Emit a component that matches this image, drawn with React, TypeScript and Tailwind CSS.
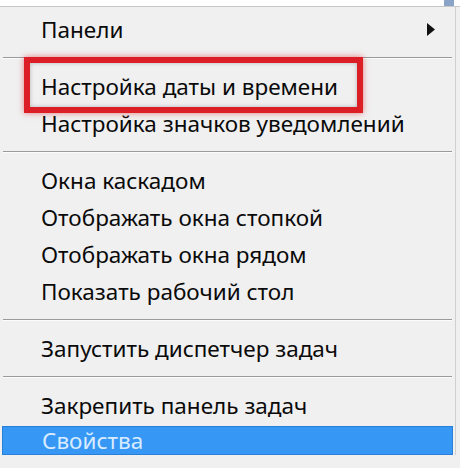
import React from "react";

const Sep = () => (
  <div className="h-[20px] flex flex-col justify-center px-[3px]">
    <div className="h-[1px] bg-[#9a9a9a]" />
    <div className="h-[1px] bg-[#fcfcfc]" />
  </div>
);

const Item = ({ children, arrow }: { children: React.ReactNode; arrow?: boolean }) => (
  <div className="h-[37px] flex items-center pl-[41px] pr-[20px] text-[22.5px] text-[#0a0a0a] justify-between">
    <span>{children}</span>
    {arrow && (
      <svg width="8" height="13" viewBox="0 0 8 13">
        <polygon points="0,0 8,6.5 0,13" fill="#111" />
      </svg>
    )}
  </div>
);

export default function App() {
  return (
    <div
      className="w-[460px] h-[468px] bg-[#f0f0f0] relative overflow-hidden"
      style={{ fontFamily: '"Noto Sans", "Open Sans", sans-serif' }}
    >
      <div className="h-[7px] bg-white border-b border-[#c8c8c8] relative">
        <div className="absolute right-[6px] top-0 w-[10px] h-[6px] bg-[#8aa4c8]" />
      </div>
      <div className="border-r border-[#d0d0d0] w-[456px] pt-[4px]">
        <Item arrow>Панели</Item>
        <Sep />
        <Item>Настройка даты и времени</Item>
        <Item>Настройка значков уведомлений</Item>
        <Sep />
        <Item>Окна каскадом</Item>
        <Item>Отображать окна стопкой</Item>
        <Item>Отображать окна рядом</Item>
        <Item>Показать рабочий стол</Item>
        <Sep />
        <Item>Запустить диспетчер задач</Item>
        <Sep />
        <Item>Закрепить панель задач</Item>
        <div className="mx-[2px] mt-[2px] h-[29px] bg-[#3797f5] border border-[#2a7fd8] flex items-center pl-[39px] text-[22.5px] text-[#d9ecff]">
          Свойства
        </div>
      </div>
      <div
        className="absolute left-[24px] top-[57px] w-[339px] h-[56px] border-[6px] border-[#dc1f26]"
        style={{ boxShadow: "0 0 6px rgba(220,30,40,0.55), inset 0 0 4px rgba(0,0,0,0.25)" }}
      />
    </div>
  );
}
